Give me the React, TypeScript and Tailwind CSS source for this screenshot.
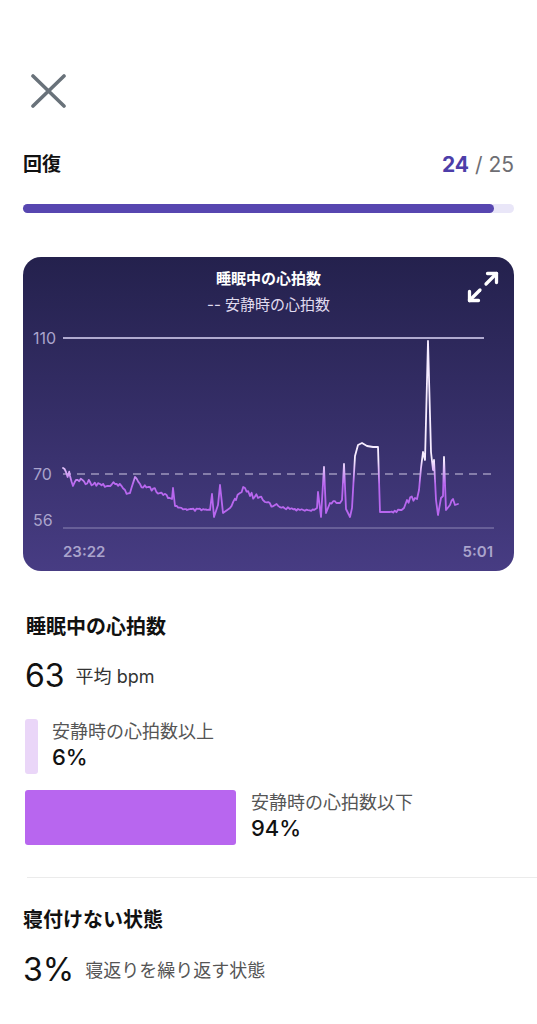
import { Maximize2 } from "lucide-react";

// key points of the heart rate trace, in page pixels: [x, y, noise]
const KEYS: [number, number, number][] = [
  [63, 468, 1], [66, 472, 4], [70, 476, 4], [73, 486, 2], [76, 480, 3], [90, 482, 3],
  [100, 484, 3], [107, 486, 3], [115, 484, 3], [125, 490, 3], [130, 493, 1], [135, 477, 1],
  [140, 484, 3], [150, 487, 3], [160, 493, 3], [168, 498, 1], [172, 499, 0], [173, 488, 0],
  [175, 506, 1], [187, 510, 1.5], [207, 510, 1.5], [210, 510, 0], [212, 494, 0], [214, 517, 0],
  [218, 505, 1], [220, 485, 0], [223, 513, 0], [230, 508, 3], [236, 500, 4], [240, 493, 4],
  [245, 488, 3], [250, 496, 4], [258, 498, 4], [265, 502, 3], [275, 505, 2], [283, 507, 1.5],
  [290, 509, 1], [300, 510, 1], [314, 510, 0], [317, 508, 0], [318, 492, 0], [321, 517, 0],
  [324, 467, 0], [326, 513, 0], [330, 503, 2], [340, 503, 2], [342, 500, 1], [344, 464, 0],
  [346, 509, 0], [350, 517, 0], [352, 508, 0], [355, 456, 0], [358, 445, 0], [362, 443, 0],
  [367, 446, 0], [373, 447, 0], [378, 447, 0], [380, 512, 0], [390, 512, 1.5], [400, 510, 1.5],
  [404, 508, 0], [407, 500, 3], [417, 499, 3], [419, 490, 0], [421, 468, 0], [423, 452, 0],
  [425, 460, 0], [428, 341, 0], [431, 452, 0], [433, 470, 0], [434, 460, 0], [436, 500, 0],
  [438, 515, 0], [441, 498, 1], [443, 496, 0], [444, 457, 0], [446, 510, 0], [450, 505, 2],
  [453, 499, 0], [455, 505, 0], [458, 504, 0],
];

const rnd = (i: number) => {
  const s = Math.sin(i * 12.9898) * 43758.5453;
  return s - Math.floor(s);
};

function tracePoints() {
  const pts: string[] = [];
  let n = 0;
  for (let k = 0; k < KEYS.length - 1; k++) {
    const [x0, y0, a] = KEYS[k];
    const [x1, y1] = KEYS[k + 1];
    pts.push(`${x0},${y0}`);
    if (a > 0) {
      for (let x = x0 + 1.6; x < x1 - 0.8; x += 1.6) {
        const t = (x - x0) / (x1 - x0);
        const y = y0 + (y1 - y0) * t + (rnd(n++) - 0.5) * 2 * a;
        pts.push(`${x.toFixed(1)},${y.toFixed(1)}`);
      }
    }
  }
  const last = KEYS[KEYS.length - 1];
  pts.push(`${last[0]},${last[1]}`);
  return pts.join(" ");
}

function HeartChart() {
  return (
    <svg width="491" height="253" viewBox="23 318 491 253" className="block">
      <defs>
        <linearGradient id="hr" gradientUnits="userSpaceOnUse" x1="0" y1="460" x2="0" y2="484">
          <stop offset="0" stopColor="#f6ecff" />
          <stop offset="1" stopColor="#b867ef" />
        </linearGradient>
      </defs>
      <g fontFamily="Inter, 'Noto Sans CJK JP', sans-serif" fill="#aaa4cc">
        <text x="33" y="344" fontSize="16">110</text>
        <text x="33" y="480" fontSize="16">70</text>
        <text x="33" y="526" fontSize="16">56</text>
        <text x="63" y="557" fontSize="15" fontWeight="600">23:22</text>
        <text x="493" y="557" fontSize="15" fontWeight="600" textAnchor="end">5:01</text>
      </g>
      <line x1="63" y1="338" x2="484" y2="338" stroke="#dcd6f7" strokeWidth="1.6" />
      <line x1="63" y1="474" x2="494" y2="474" stroke="#9d96bd" strokeWidth="1.3" strokeDasharray="8 6" />
      <line x1="63" y1="528" x2="494" y2="528" stroke="#8d86b6" strokeWidth="1" />
      <polyline
        points={tracePoints()}
        fill="none"
        stroke="url(#hr)"
        strokeWidth="1.8"
        strokeLinejoin="round"
        strokeLinecap="round"
      />
    </svg>
  );
}

export default function App() {
  return (
    <div className="min-h-[1024px] w-full bg-white text-[#111] font-['Inter','Noto_Sans_CJK_JP',sans-serif]">
      <div className="px-[23px] pt-[73px]">
        <svg width="36" height="36" viewBox="0 0 36 36" className="ml-[7px] block">
          <path d="M3 3 L34 33 M34 3 L3 33" stroke="#69727a" strokeWidth="3.6" strokeLinecap="round" />
        </svg>

        <div className="mt-[42px] flex h-[28px] items-center justify-between">
          <span className="text-[19px] font-bold">回復</span>
          <span className="text-[21px] text-[#6e6e73]">
            <span className="font-bold text-[#4d3ea9]">24</span> / 25
          </span>
        </div>

        <div className="mt-[25px] h-[9px] w-full rounded-full bg-[#e9e6f8]">
          <div className="h-full w-[96%] rounded-full bg-[#5746b0]" />
        </div>

        <div className="mt-[44px] h-[314px] overflow-hidden rounded-[18px] bg-gradient-to-b from-[#24214d] to-[#473c83]">
          <div className="relative flex flex-col items-center pt-[11px]">
            <span className="text-[15px] leading-[22px] font-bold text-white">睡眠中の心拍数</span>
            <span className="mt-[4px] text-[15px] leading-[22px] text-[#e0dcf0]">-- 安静時の心拍数</span>
            <Maximize2
              size={36}
              strokeWidth={2.2}
              color="white"
              className="absolute right-[13px] top-[12px]"
            />
          </div>
          <div className="mt-[2px]">
            <HeartChart />
          </div>
        </div>

        <h2 className="mt-[42px] ml-[3px] text-[20px] leading-[28px] font-bold">睡眠中の心拍数</h2>
        <div className="mt-[15px] ml-[2px] flex h-[40px] items-center gap-[11px]">
          <span className="text-[32px] leading-[40px]">63</span>
          <span className="text-[18px] text-[#333]">平均 bpm</span>
        </div>

        <div className="mt-[23px] ml-[2px] flex items-start gap-[14px]">
          <div className="h-[55px] w-[13px] rounded-[3px] bg-[#ead6f8]" />
          <div className="flex flex-col pt-[1px]">
            <span className="text-[18px] leading-[24px] text-[#555]">安静時の心拍数以上</span>
            <span className="text-[22px] leading-[26px] font-medium">6%</span>
          </div>
        </div>

        <div className="mt-[16px] ml-[2px] flex items-start gap-[15px]">
          <div className="h-[55px] w-[211px] rounded-[3px] bg-[#b866ef]" />
          <div className="flex flex-col pt-[1px]">
            <span className="text-[18px] leading-[24px] text-[#555]">安静時の心拍数以下</span>
            <span className="text-[22px] leading-[26px] font-medium">94%</span>
          </div>
        </div>

        <div className="mt-[32px] ml-[4px] mr-[-23px] h-px bg-[#ebebeb]" />

        <h2 className="mt-[28px] text-[20px] leading-[28px] font-bold">寝付けない状態</h2>
        <div className="mt-[16px] flex h-[40px] items-center gap-[11px]">
          <span className="text-[32px] leading-[40px]">3%</span>
          <span className="text-[18px] text-[#555]">寝返りを繰り返す状態</span>
        </div>
      </div>
    </div>
  );
}
